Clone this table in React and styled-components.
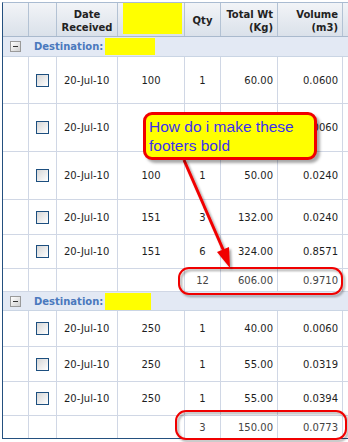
import React from 'react';
import styled, { createGlobalStyle } from 'styled-components';

const GlobalStyle = createGlobalStyle`
  html, body {
    margin: 0;
    padding: 0;
    background: #ffffff;
    overflow: hidden;
  }
  body {
    font-family: "DejaVu Sans", Tahoma, sans-serif;
  }
`;

// column widths, right grid line included
const COLS = [26, 28, 61, 67, 36, 57, 65];

const Page = styled.div`
  position: relative;
  width: 348px;
  height: 442px;
  padding: 2px 0 0 2px;
  box-sizing: border-box;
  overflow: hidden;
`;

const Grid = styled.div`
  width: 360px;
  border-top: 1px solid #a9bbd1;
  border-left: 1px solid #24507f;
  border-bottom: 1px solid #24507f;
  font-size: 10px;
  color: #1e1e1e;
`;

const HeaderRow = styled.div`
  display: flex;
  height: 34px;
  box-sizing: border-box;
  background: linear-gradient(#f2f4f7, #dae1ea);
  border-bottom: 1px solid #a9b9cd;
`;

const HeaderCell = styled.div`
  flex: ${p => (p.$w ? `0 0 ${p.$w}px` : '1')};
  box-sizing: border-box;
  border-right: 1px solid #b3c2d4;
  display: flex;
  flex-direction: column;
  justify-content: ${p => (p.$top ? 'flex-start' : 'center')};
  align-items: ${p => p.$align || 'center'};
  text-align: ${p => (p.$align === 'flex-end' ? 'right' : 'center')};
  padding: ${p => (p.$top ? '0' : '2px 4px 0 4px')};
  font-weight: bold;
  color: #222;
  line-height: 13px;
`;

const YellowBlock = styled.div`
  width: ${p => p.$w}px;
  height: ${p => p.$h}px;
  margin-left: ${p => p.$ml || 0}px;
  background: #ffff00;
`;

const GroupRow = styled.div`
  display: flex;
  align-items: center;
  height: ${p => p.$h}px;
  box-sizing: border-box;
  background: #e3e9f4;
  border-bottom: 1px solid #cad5e4;
  padding-left: 7px;
`;

const Toggle = styled.div`
  width: 11px;
  height: 11px;
  box-sizing: border-box;
  border: 1px solid #9a9a9a;
  background: linear-gradient(135deg, #ffffff, #cfcfcf);
  display: flex;
  align-items: center;
  justify-content: center;
  margin-right: 13px;

  &::after {
    content: '';
    width: 5px;
    height: 1px;
    background: #333;
  }
`;

const GroupLabel = styled.span`
  font-weight: bold;
  color: #4a78bd;
  margin-right: 2px;
`;

const Row = styled.div`
  display: flex;
  height: ${p => p.$h}px;
  box-sizing: border-box;
  border-bottom: ${p => (p.$last ? 'none' : '1px solid #d0d7e5')};
  background: #fff;
`;

const Cell = styled.div`
  flex: ${p => (p.$w ? `0 0 ${p.$w}px` : '1')};
  box-sizing: border-box;
  border-right: 1px solid #d0d7e5;
  display: flex;
  align-items: center;
  justify-content: ${p => p.$align || 'center'};
  padding: 0 4px;
  color: ${p => (p.$footer ? '#444' : '#1e1e1e')};
  white-space: nowrap;
`;

const CheckBox = styled.div`
  width: 13px;
  height: 13px;
  box-sizing: border-box;
  border: 1px solid #1d4f7f;
  background: linear-gradient(135deg, #d6d6d6, #ffffff);
`;

const Callout = styled.div`
  position: absolute;
  left: 143px;
  top: 112px;
  width: 174px;
  height: 48px;
  box-sizing: border-box;
  background: #ffff00;
  border: 3px solid #f00000;
  border-radius: 9px;
  box-shadow: 3px 3px 3px rgba(0, 0, 0, 0.35);
  padding: 2px 2px 0 3px;
  font-family: "Liberation Sans", Arial, sans-serif;
  font-size: 15.5px;
  line-height: 19px;
  color: #3a30f0;
`;

const Overlay = styled.svg`
  position: absolute;
  left: 0;
  top: 0;
  pointer-events: none;
`;

const groups = [
  {
    labelW: 50,
    h: 20,
    rows: [
      { h: 47, date: '20-Jul-10', ref: '100', qty: '1', wt: '60.00', vol: '0.0600' },
      { h: 48, date: '20-Jul-10', ref: '', qty: '', wt: '', vol: '0.0060' },
      { h: 48, date: '20-Jul-10', ref: '100', qty: '1', wt: '50.00', vol: '0.0240' },
      { h: 35, date: '20-Jul-10', ref: '151', qty: '3', wt: '132.00', vol: '0.0240' },
      { h: 34, date: '20-Jul-10', ref: '151', qty: '6', wt: '324.00', vol: '0.8571' },
    ],
    footer: { h: 23, qty: '12', wt: '606.00', vol: '0.9710' },
  },
  {
    labelW: 46,
    h: 19,
    rows: [
      { h: 36, date: '20-Jul-10', ref: '250', qty: '1', wt: '40.00', vol: '0.0060' },
      { h: 35, date: '20-Jul-10', ref: '250', qty: '1', wt: '55.00', vol: '0.0319' },
      { h: 34, date: '20-Jul-10', ref: '250', qty: '1', wt: '55.00', vol: '0.0394' },
    ],
    footer: { h: 22, qty: '3', wt: '150.00', vol: '0.0773', last: true },
  },
];

function DataRow({ row }) {
  return (
    <Row $h={row.h}>
      <Cell $w={COLS[0]} />
      <Cell $w={COLS[1]}><CheckBox /></Cell>
      <Cell $w={COLS[2]} $align="flex-start" style={{ paddingLeft: 7 }}>{row.date}</Cell>
      <Cell $w={COLS[3]}>{row.ref}</Cell>
      <Cell $w={COLS[4]}>{row.qty}</Cell>
      <Cell $w={COLS[5]} $align="flex-end">{row.wt}</Cell>
      <Cell $w={COLS[6]} $align="flex-end">{row.vol}</Cell>
      <Cell />
    </Row>
  );
}

function FooterRow({ f }) {
  return (
    <Row $h={f.h} $last={f.last}>
      <Cell $w={COLS[0]} />
      <Cell $w={COLS[1]} />
      <Cell $w={COLS[2]} />
      <Cell $w={COLS[3]} />
      <Cell $w={COLS[4]} $footer>{f.qty}</Cell>
      <Cell $w={COLS[5]} $align="flex-end" $footer>{f.wt}</Cell>
      <Cell $w={COLS[6]} $align="flex-end" $footer>{f.vol}</Cell>
      <Cell />
    </Row>
  );
}

export default function App() {
  return (
    <Page>
      <GlobalStyle />
      <Grid>
        <HeaderRow>
          <HeaderCell $w={COLS[0]} />
          <HeaderCell $w={COLS[1]} />
          <HeaderCell $w={COLS[2]}>
            <span>Date</span>
            <span>Received</span>
          </HeaderCell>
          <HeaderCell $w={COLS[3]} $top $align="flex-start">
            <YellowBlock $w={59} $h={31} $ml={5} />
          </HeaderCell>
          <HeaderCell $w={COLS[4]}>Qty</HeaderCell>
          <HeaderCell $w={COLS[5]} $align="flex-end">
            <span>Total Wt</span>
            <span>(Kg)</span>
          </HeaderCell>
          <HeaderCell $w={COLS[6]} $align="flex-end">
            <span>Volume</span>
            <span>(m3)</span>
          </HeaderCell>
          <HeaderCell />
        </HeaderRow>

        {groups.map((g, gi) => (
          <React.Fragment key={gi}>
            <GroupRow $h={g.h}>
              <Toggle />
              <GroupLabel>Destination:</GroupLabel>
              <YellowBlock $w={g.labelW} $h={17} />
            </GroupRow>
            {g.rows.map((r, ri) => (
              <DataRow key={ri} row={r} />
            ))}
            <FooterRow f={g.footer} />
          </React.Fragment>
        ))}
      </Grid>

      <Overlay width="348" height="442" viewBox="0 0 348 442">
        <defs>
          <filter id="shadow" x="-20%" y="-20%" width="140%" height="140%">
            <feDropShadow dx="2" dy="2" stdDeviation="1.2" floodColor="#000" floodOpacity="0.35" />
          </filter>
        </defs>
        <g filter="url(#shadow)" fill="none" stroke="#f00000" strokeWidth="2">
          <rect x="179" y="268" width="163" height="26" rx="10" />
          <rect x="176" y="411" width="170" height="28" rx="10" />
        </g>
        <g filter="url(#shadow)">
          <line x1="184" y1="160" x2="225" y2="254" stroke="#f00000" strokeWidth="3" />
          <polygon points="230,268 217,252 229,247" fill="#f00000" />
        </g>
      </Overlay>

      <Callout>How do i make these footers bold</Callout>
    </Page>
  );
}
